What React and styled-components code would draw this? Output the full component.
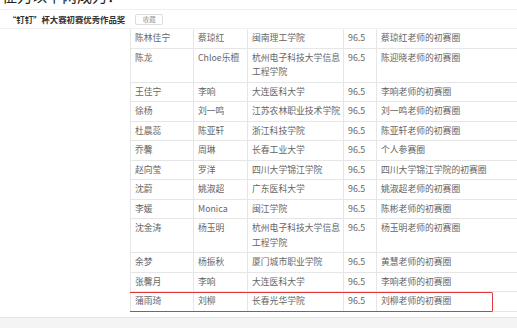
import React from "react";
import styled, { createGlobalStyle } from "styled-components";

const GlobalStyle = createGlobalStyle`
  html, body {
    margin: 0;
    padding: 0;
    background: #fff;
  }
  body {
    font-family: "Noto Sans CJK SC", "Noto Sans", sans-serif;
    overflow: hidden;
  }
`;

const Page = styled.div`
  width: 517px;
  height: 328px;
  display: flex;
  flex-direction: column;
  overflow: hidden;
`;

// the line above is scrolled away, only its lower part shows
const CutLine = styled.div`
  height: 9px;
  overflow: hidden;
  flex-shrink: 0;
`;

const CutText = styled.div`
  margin-top: -13px;
  padding-left: 2px;
  font-size: 15px;
  line-height: 18px;
  color: #222;
`;

const HeaderBar = styled.div`
  height: 18px;
  flex-shrink: 0;
  display: flex;
  align-items: center;
  gap: 10px;
  padding-left: 8px;
  border-top: 1px solid #f0f0f0;
  border-bottom: 1px solid #f0f0f0;
  background: #fff;
`;

const Title = styled.span`
  font-size: 8.4px;
  font-weight: 700;
  color: #333;
  white-space: nowrap;
`;

const SmallButton = styled.button`
  height: 11px;
  width: 28px;
  padding: 0;
  border: 1px solid #ddd;
  border-radius: 2px;
  background: #fff;
  color: #999;
  font-family: inherit;
  font-size: 6.5px;
  line-height: 9px;
`;

const Table = styled.div`
  margin-left: 130px;
  width: 387px;
  flex: 1;
  overflow: hidden;
  font-size: 8.8px;
  color: #666;
`;

const Row = styled.div`
  position: relative;
  display: grid;
  grid-template-columns: 63px 54px 96px 33px 141px;
  border-bottom: 1px solid #e6e6e6;
`;

const Cell = styled.div`
  padding: 2px 2px 2px 4px;
  line-height: 14.5px;
  border-left: 1px solid #e6e6e6;
  word-break: break-all;
  white-space: ${p => (p.$nowrap ? "nowrap" : "normal")};
`;

const Marked = styled.span`
  position: absolute;
  left: -22px;
  top: 0;
  width: 385px;
  height: 20px;
  border: 1.5px solid #e0393c;
  box-sizing: border-box;
  border-radius: 1px;
  pointer-events: none;
`;

const Footer = styled.div`
  height: 10px;
  flex-shrink: 0;
  background: #f4f4f4;
  border-top: 1px solid #e4e4e4;
`;

const rows = [
  ["陈林佳宁", "蔡琼红", "闽南理工学院", "96.5", "蔡琼红老师的初赛圈"],
  ["陈龙", "Chloe乐檀", "杭州电子科技大学信息工程学院", "96.5", "陈迎晓老师的初赛圈"],
  ["王佳宁", "李响", "大连医科大学", "96.5", "李响老师的初赛圈"],
  ["徐杨", "刘一鸣", "江苏农林职业技术学院", "96.5", "刘一鸣老师的初赛圈"],
  ["杜晨蕊", "陈亚轩", "浙江科技学院", "96.5", "陈亚轩老师的初赛圈"],
  ["乔馨", "周琳", "长春工业大学", "96.5", "个人参赛圈"],
  ["赵向莹", "罗洋", "四川大学锦江学院", "96.5", "四川大学锦江学院的初赛圈"],
  ["沈蔚", "姚淑超", "广东医科大学", "96.5", "姚淑超老师的初赛圈"],
  ["李媛", "Monica", "闽江学院", "96.5", "陈彬老师的初赛圈"],
  ["沈金涛", "杨玉明", "杭州电子科技大学信息工程学院", "96.5", "杨玉明老师的初赛圈"],
  ["余梦", "杨振秋", "厦门城市职业学院", "96.5", "黄慧老师的初赛圈"],
  ["张馨月", "李响", "大连医科大学", "96.5", "李响老师的初赛圈"],
  ["蒲雨琦", "刘柳", "长春光华学院", "96.5", "刘柳老师的初赛圈", true],
];

export default function App() {
  return (
    <Page>
      <GlobalStyle />
      <CutLine>
        <CutText>征为以下两成为：</CutText>
      </CutLine>
      <HeaderBar>
        <Title>“钉钉”杯大赛初赛优秀作品奖</Title>
        <SmallButton>收藏</SmallButton>
      </HeaderBar>
      <Table>
        {rows.map(([name, teacher, school, score, circle, marked], i) => (
          <Row key={i}>
            {marked && <Marked />}
            <Cell>{name}</Cell>
            <Cell>{teacher}</Cell>
            <Cell>{school}</Cell>
            <Cell $nowrap>{score}</Cell>
            <Cell $nowrap>{circle}</Cell>
          </Row>
        ))}
      </Table>
      <Footer />
    </Page>
  );
}
